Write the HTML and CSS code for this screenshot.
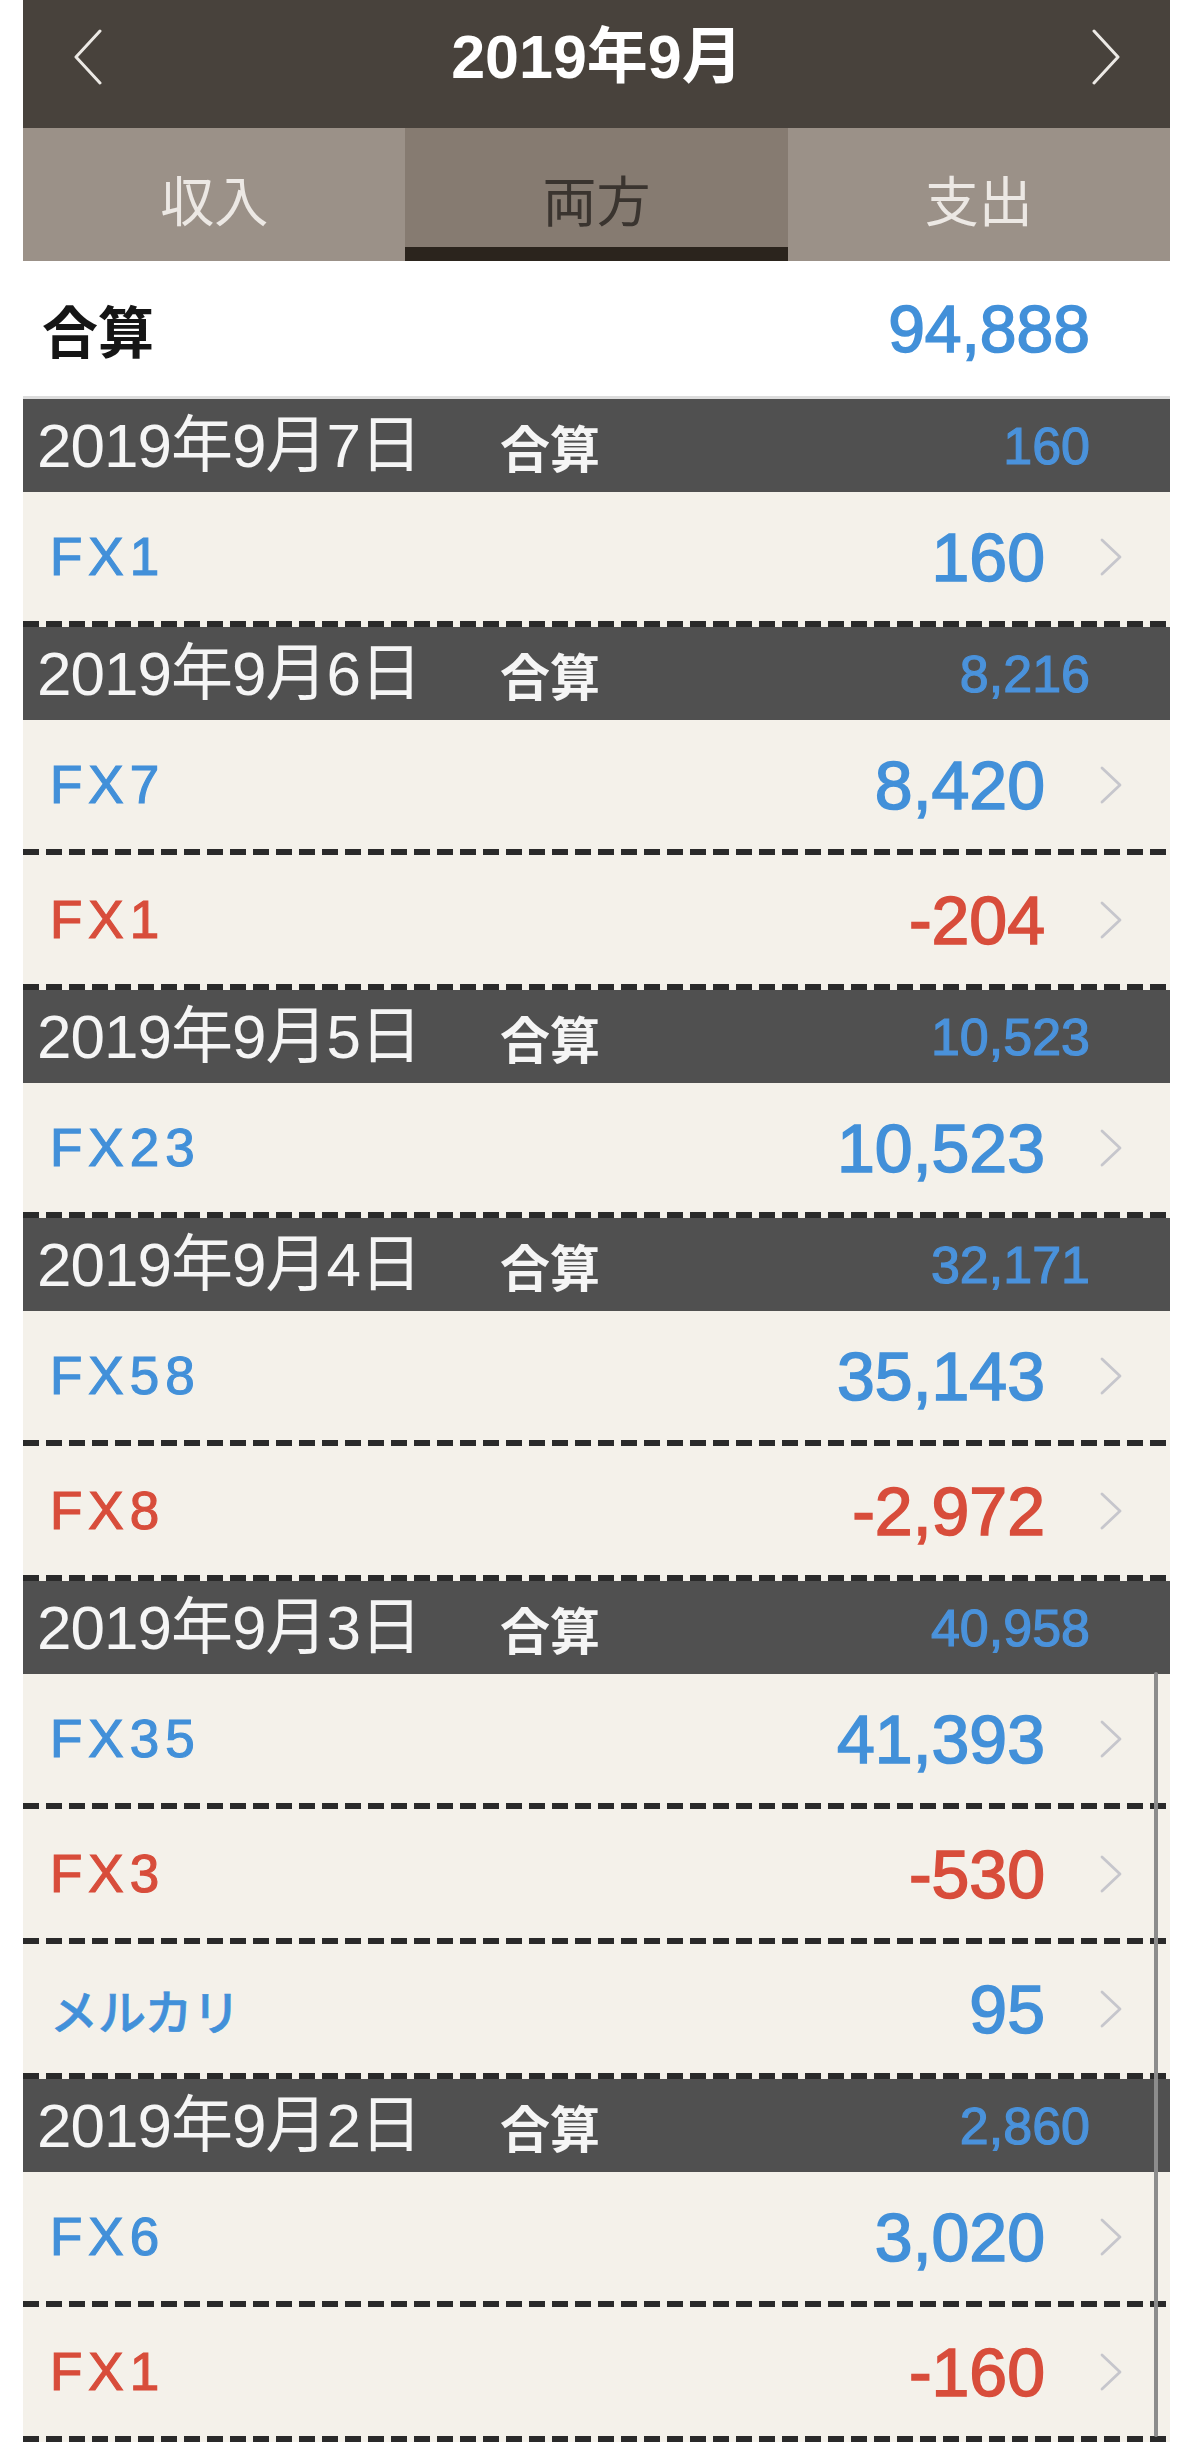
FILE: index.html
```html
<!DOCTYPE html>
<html lang="ja">
<head>
<meta charset="utf-8">
<title>2019年9月</title>
<link rel="stylesheet" href="styles.css">
</head>
<body>
<div class="screen">
  <header class="navbar">
    <svg class="nav-arrow" viewBox="0 0 32 56"><polyline points="28,2 4,28 28,54"/></svg>
    <h1 class="title">2019年9月</h1>
    <svg class="nav-arrow" viewBox="0 0 32 56"><polyline points="4,2 28,28 4,54"/></svg>
  </header>
  <nav class="tabs">
    <div class="tab">収入</div>
    <div class="tab active">両方</div>
    <div class="tab">支出</div>
  </nav>
  <div class="total-row">
    <span class="total-label">合算</span>
    <span class="total-amount">94,888</span>
  </div>
  <div class="list">
    <section class="day">
      <div class="day-head"><span class="day-date">2019年9月7日</span><span class="day-label">合算</span><span class="day-amount">160</span></div>
      <div class="item"><span class="item-name blue">FX1</span><span class="item-amount blue">160</span><svg class="chev" viewBox="0 0 24 40"><polyline points="3,3 21,20 3,37"/></svg></div>
    </section>
    <section class="day">
      <div class="day-head"><span class="day-date">2019年9月6日</span><span class="day-label">合算</span><span class="day-amount">8,216</span></div>
      <div class="item"><span class="item-name blue">FX7</span><span class="item-amount blue">8,420</span><svg class="chev" viewBox="0 0 24 40"><polyline points="3,3 21,20 3,37"/></svg></div>
      <div class="item"><span class="item-name red">FX1</span><span class="item-amount red">-204</span><svg class="chev" viewBox="0 0 24 40"><polyline points="3,3 21,20 3,37"/></svg></div>
    </section>
    <section class="day">
      <div class="day-head"><span class="day-date">2019年9月5日</span><span class="day-label">合算</span><span class="day-amount">10,523</span></div>
      <div class="item"><span class="item-name blue">FX23</span><span class="item-amount blue">10,523</span><svg class="chev" viewBox="0 0 24 40"><polyline points="3,3 21,20 3,37"/></svg></div>
    </section>
    <section class="day">
      <div class="day-head"><span class="day-date">2019年9月4日</span><span class="day-label">合算</span><span class="day-amount">32,171</span></div>
      <div class="item"><span class="item-name blue">FX58</span><span class="item-amount blue">35,143</span><svg class="chev" viewBox="0 0 24 40"><polyline points="3,3 21,20 3,37"/></svg></div>
      <div class="item"><span class="item-name red">FX8</span><span class="item-amount red">-2,972</span><svg class="chev" viewBox="0 0 24 40"><polyline points="3,3 21,20 3,37"/></svg></div>
    </section>
    <section class="day">
      <div class="day-head"><span class="day-date">2019年9月3日</span><span class="day-label">合算</span><span class="day-amount">40,958</span></div>
      <div class="item"><span class="item-name blue">FX35</span><span class="item-amount blue">41,393</span><svg class="chev" viewBox="0 0 24 40"><polyline points="3,3 21,20 3,37"/></svg></div>
      <div class="item"><span class="item-name red">FX3</span><span class="item-amount red">-530</span><svg class="chev" viewBox="0 0 24 40"><polyline points="3,3 21,20 3,37"/></svg></div>
      <div class="item"><span class="item-name kana blue">メルカリ</span><span class="item-amount blue">95</span><svg class="chev" viewBox="0 0 24 40"><polyline points="3,3 21,20 3,37"/></svg></div>
    </section>
    <section class="day">
      <div class="day-head"><span class="day-date">2019年9月2日</span><span class="day-label">合算</span><span class="day-amount">2,860</span></div>
      <div class="item"><span class="item-name blue">FX6</span><span class="item-amount blue">3,020</span><svg class="chev" viewBox="0 0 24 40"><polyline points="3,3 21,20 3,37"/></svg></div>
      <div class="item"><span class="item-name red">FX1</span><span class="item-amount red">-160</span><svg class="chev" viewBox="0 0 24 40"><polyline points="3,3 21,20 3,37"/></svg></div>
    </section>
    <div class="scroll-indicator"></div>
  </div>
</div>
</body>
</html>
```

FILE: styles.css
```css
html, body {
  margin: 0;
  background: #ffffff;
}

body {
  font-family: "Liberation Sans", "Noto Sans CJK JP", sans-serif;
}

.screen {
  padding: 0 22px 0 23px;
}

/* top navigation bar */
.navbar {
  height: 128px;
  box-sizing: border-box;
  background: #48423c;
  display: flex;
  align-items: center;
  justify-content: space-between;
  padding: 0 48px 14px 49px;
}

.title {
  margin: 0;
  color: #ffffff;
  font-size: 61px;
  font-weight: 700;
  line-height: 1;
}

.nav-arrow {
  width: 32px;
  height: 56px;
  display: block;
}

.nav-arrow polyline {
  fill: none;
  stroke: #ece9e5;
  stroke-width: 3;
  stroke-linecap: round;
  stroke-linejoin: round;
}

/* segmented tabs */
.tabs {
  display: grid;
  grid-template-columns: repeat(3, 1fr);
  height: 133px;
  background: #9b9188;
}

.tab {
  display: flex;
  align-items: center;
  justify-content: center;
  padding-top: 8px;
  box-sizing: border-box;
  font-family: "Noto Sans CJK JP", sans-serif;
  font-size: 54px;
  line-height: 1;
  color: #ece8e4;
}

.tab.active {
  background: #867b71;
  color: #3a342f;
  box-shadow: inset 0 -14px 0 #2b241d;
}

/* monthly total */
.total-row {
  height: 138px;
  box-sizing: border-box;
  background: #ffffff;
  border-bottom: 3px solid #dcdcdc;
  display: flex;
  align-items: center;
  justify-content: space-between;
  padding: 0 80px 0 19px;
}

.total-label {
  font-family: "Noto Sans CJK JP", sans-serif;
  font-size: 56px;
  font-weight: 700;
  line-height: 1;
  color: #161616;
}

.total-amount {
  font-size: 66px;
  line-height: 1;
  color: #4290d9;
  -webkit-text-stroke: 1.6px currentColor;
}

/* list */
.list {
  position: relative;
}

.day-head {
  height: 93px;
  box-sizing: border-box;
  background: #505050;
  display: flex;
  align-items: center;
  padding: 0 80px 0 14px;
  color: #f5f5f5;
}

.day-date {
  width: 463px;
  font-size: 62px;
  letter-spacing: -1px;
  line-height: 1;
}

.day-label {
  font-family: "Noto Sans CJK JP", sans-serif;
  font-size: 50px;
  font-weight: 700;
  line-height: 1;
}

.day-amount {
  margin-left: auto;
  font-size: 52px;
  line-height: 1;
  color: #4a92db;
  -webkit-text-stroke: 1.2px currentColor;
}

.item {
  height: 135px;
  box-sizing: border-box;
  display: flex;
  align-items: center;
  padding: 0 47px 6px 27px;
  background-color: #f4f1ea;
  background-image: repeating-linear-gradient(to right, #2a2a2a 0 16px, transparent 16px 23px);
  background-size: 100% 6px;
  background-position: left bottom;
  background-repeat: no-repeat;
}

.item-name {
  font-size: 53px;
  letter-spacing: 6px;
  line-height: 1;
  -webkit-text-stroke: 1.2px currentColor;
}

.item-name.kana {
  font-family: "Noto Sans CJK JP", sans-serif;
  font-size: 48px;
  font-weight: 500;
  letter-spacing: 0;
  -webkit-text-stroke: 0.6px currentColor;
}

.item-amount {
  margin-left: auto;
  font-size: 68px;
  line-height: 1;
  -webkit-text-stroke: 1.6px currentColor;
}

.chev {
  width: 24px;
  height: 40px;
  margin-left: 54px;
  display: block;
}

.chev polyline {
  fill: none;
  stroke: #c6c6cc;
  stroke-width: 2.8;
  stroke-linecap: round;
  stroke-linejoin: round;
}

.blue {
  color: #4290d9;
}

.red {
  color: #d84d3b;
}

.scroll-indicator {
  position: absolute;
  right: 12px;
  top: 1273px;
  width: 4px;
  height: 765px;
  border-radius: 2px;
  background: #8c8c8c;
}
```
